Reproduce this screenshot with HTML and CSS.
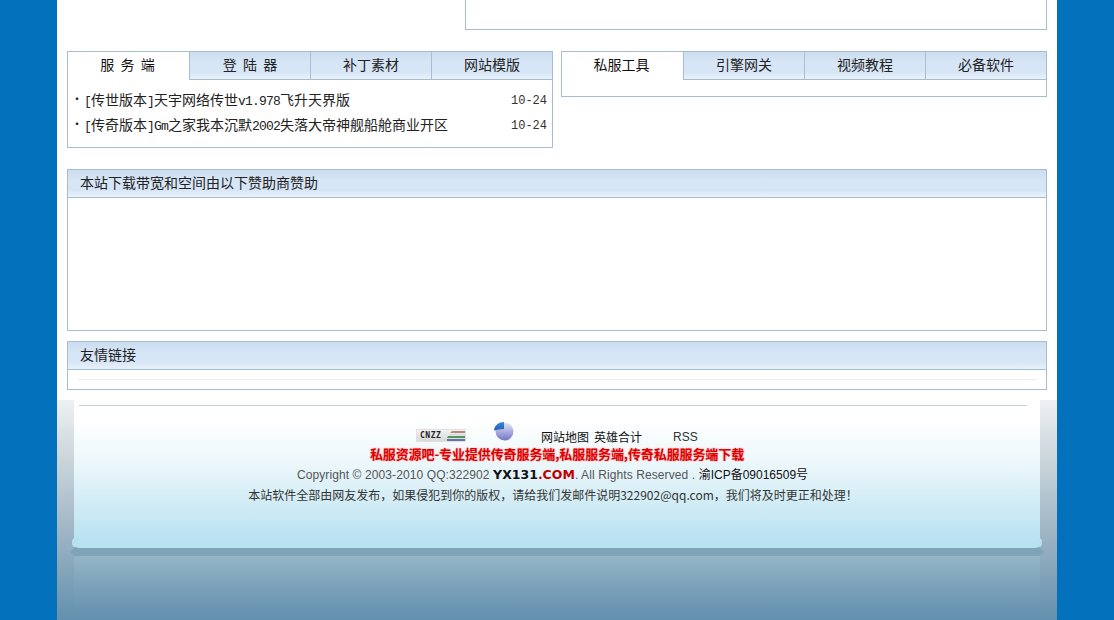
FILE: index.html
```html
<!DOCTYPE html>
<html lang="zh">
<head>
<meta charset="utf-8">
<title>私服资源吧</title>
<link rel="stylesheet" href="styles.css">
</head>
<body>
<div class="page">
  <div class="content">
    <div class="top-row"><div class="top-box"></div></div>
    <div class="tab-row">
      <div class="panel">
        <div class="tabs">
          <div class="tab active">服 务 端</div>
          <div class="tab">登 陆 器</div>
          <div class="tab">补丁素材</div>
          <div class="tab">网站模版</div>
        </div>
        <ul class="list">
          <li><span class="dot">·</span><span class="item"><span class="latin">[</span>传世版本<span class="latin">]</span>天宇网络传世<span class="latin">v1.978</span>飞升天界版</span><span class="date">10-24</span></li>
          <li><span class="dot">·</span><span class="item"><span class="latin">[</span>传奇版本<span class="latin">]Gm</span>之家我本沉默<span class="latin">2002</span>失落大帝神舰船舱商业开区</span><span class="date">10-24</span></li>
        </ul>
      </div>
      <div class="panel panel-empty">
        <div class="tabs">
          <div class="tab active">私服工具</div>
          <div class="tab">引擎网关</div>
          <div class="tab">视频教程</div>
          <div class="tab">必备软件</div>
        </div>
        <div class="panel-spacer"></div>
      </div>
    </div>
    <section class="box sponsor">
      <h2 class="box-title">本站下载带宽和空间由以下赞助商赞助</h2>
      <div class="sponsor-body"></div>
    </section>
    <section class="box links">
      <h2 class="box-title">友情链接</h2>
      <div class="links-body"><div class="links-line"></div></div>
    </section>
  </div>
  <footer class="footer">
    <div class="footer-main">
      <div class="footer-rule"></div>
      <div class="footer-nav">
        <span class="cnzz"><span class="cnzz-text">CNZZ</span>
          <svg class="cnzz-bars" width="18" height="10" viewBox="0 0 18 10"><path d="M5 0H18V2H3Z" fill="#b9867c"/><rect x="2" y="3" width="16" height="1" fill="#d9d9d9"/><path d="M1 5H18V7H0Z" fill="#4f9a58"/><rect y="8" width="18" height="2" fill="#6a6fb0"/></svg></span>
        <svg class="pie" width="22" height="20" viewBox="0 0 22 20"><defs><linearGradient id="pg" x1="0" y1="0" x2="0" y2="1"><stop offset="0" stop-color="#e4e4f8"/><stop offset="1" stop-color="#7475c8"/></linearGradient><linearGradient id="pb" x1="0" y1="0" x2="0" y2="1"><stop offset="0" stop-color="#3a86dc"/><stop offset="1" stop-color="#1f5fb4"/></linearGradient></defs><circle cx="11.5" cy="10.5" r="9" fill="url(#pg)"/><path d="M1 9.5 C1.5 4 6 1 11 1 L11 8 C7 8 4 9 1 9.5 Z" fill="url(#pb)"/></svg>
        <span class="nav-links">网站地图</span>
        <span class="nav-links">英雄合计</span>
        <span class="rss">RSS</span>
      </div>
      <p class="slogan">私服资源吧-专业提供传奇服务端,私服服务端,传奇私服服务端下载</p>
      <p class="copy">Copyright © 2003-2010 QQ:322902 <b class="brand">YX131<span class="brand-red">.COM</span></b>. All Rights Reserved . <span class="icp">渝ICP备09016509号</span></p>
      <p class="notice">本站软件全部由网友发布，如果侵犯到你的版权，请给我们发邮件说明322902@qq.com，我们将及时更正和处理！</p>
    </div>
    <div class="footer-strip"></div>
    <div class="footer-base"></div>
  </footer>
</div>
</body>
</html>
```
FILE: styles.css
```css
* { box-sizing: border-box; }
html, body { margin: 0; padding: 0; height: 620px; overflow: hidden; }
body {
  background: #0471bc;
  font-family: "Noto Sans CJK SC", "Liberation Sans", sans-serif;
  color: #222;
}
.page { width: 1000px; height: 620px; margin: 0 auto; background: #fff; display: flex; flex-direction: column; }
.content { padding: 0 10px; height: 400px; }
.top-row { display: flex; justify-content: flex-end; height: 30px; }
.top-box { width: 582px; border: 1px solid #a6bdcb; border-top: 0; }
.tab-row { display: flex; align-items: flex-start; justify-content: space-between; margin-top: 21px; }
.panel { width: 486px; border: 1px solid #a6bdcb; background: #fff; }
.tabs { display: grid; grid-template-columns: repeat(4, 121px); height: 28px; }
.tab {
  background: linear-gradient(#cbddf0, #d7e6f6 40%, #d7e6f6 75%, #e9f2fb);
  border-left: 1px solid #a6bfd6;
  border-bottom: 1px solid #a6bdcb;
  font-size: 14px;
  line-height: 24px;
  text-align: center;
  word-spacing: 3px;
  color: #222;
}
.tab.active { background: #fff; border: 0; color: #111; padding-right: 2px; }
.panel-spacer { height: 16px; }
.list { list-style: none; margin: 0; padding: 6px 5px 11px 3px; }
.list li { display: flex; align-items: center; height: 25px; font-size: 14px; color: #222; }
.dot { width: 13px; flex: none; font-size: 12px; }
.item { flex: 1; white-space: nowrap; }
.latin { font-family: "Liberation Mono", monospace; font-size: 13px; letter-spacing: -0.8px; }
.date { font-family: "Liberation Mono", monospace; font-size: 12px; color: #333; padding-top: 4px; }
.box { border: 1px solid #a6bdcb; background: #fff; }
.box-title {
  margin: 0;
  height: 28px;
  padding-left: 12px;
  font-size: 14px;
  font-weight: normal;
  line-height: 25px;
  color: #222;
  background: linear-gradient(#cbddf0, #d7e6f6 40%, #d7e6f6 75%, #e9f2fb);
  border-bottom: 1px solid #a6bdcb;
}
.sponsor { margin-top: 21px; height: 162px; }
.links { margin-top: 10px; height: 49px; }
.links-body { padding: 9px 10px 0; }
.links-line { height: 1px; background: #f3ece9; }
.footer {
  flex: 1;
  display: flex;
  flex-direction: column;
  background: linear-gradient(#eef1f3 0, #cdd7dc 25%, #9fb5c4 60%, #6390ae 100%);
}
.footer-main {
  position: relative;
  width: 966px;
  height: 148px;
  margin: 0 auto 0 17px;
  background: linear-gradient(#fff 0, #fff 18px, #eef8fb 60px, #bce3f1 135px, #b7e1f0 100%);
  border-radius: 0 0 5px 5px;
  text-align: center;
  padding-top: 5px;
}
.footer-main::before,
.footer-main::after {
  content: "";
  position: absolute;
  bottom: 1px;
  width: 6px;
  height: 9px;
  border-radius: 50%;
  background: #b7e1f0;
}
.footer-main::before { left: -2px; }
.footer-main::after { right: -2px; }
.footer-rule { height: 1px; margin: 0 13px 0 5px; background: #c4ced3; }
.footer-nav { display: flex; align-items: flex-start; height: 39px; padding-left: 342px; font-size: 12px; color: #111; }
.cnzz { display: flex; align-items: center; justify-content: space-between; width: 50px; height: 13px; margin-top: 23px; padding: 0 0 0 3px; background: linear-gradient(#f3f3f3, #d8d8d8); border: 1px solid #e0e0e0; }
.cnzz-text { font-family: "DejaVu Sans Mono", monospace; font-size: 8px; line-height: 10px; font-weight: bold; color: #222; letter-spacing: 0.5px; }
.pie { margin: 15px 0 0 27px; }
.nav-links { margin-top: 22px; line-height: 18px; }
.pie + .nav-links { margin-left: 26px; }
.nav-links + .nav-links { margin-left: 5px; }
.rss { margin: 22px 0 0 31px; line-height: 18px; color: #333; font-family: "Liberation Sans", sans-serif; }
.slogan { margin: 0; height: 21px; font-size: 13px; font-weight: bold; line-height: 18px; letter-spacing: -0.1px; color: #e00000; text-shadow: 0 0 2px rgba(255, 60, 60, 0.5); }
.copy { margin: 0; height: 20px; padding-right: 9px; font-family: "Liberation Sans", "Noto Sans CJK SC", sans-serif; font-size: 12px; line-height: 18px; letter-spacing: 0.1px; color: #555; }
.brand { font-family: "DejaVu Sans", sans-serif; font-size: 12.5px; color: #111; letter-spacing: 0; }
.brand-red { color: #c00000; }
.icp { color: #111; letter-spacing: 0; }
.notice { margin: 0; padding-right: 8px; font-family: "Noto Sans CJK SC", "Liberation Sans", sans-serif; font-size: 12px; line-height: 18px; color: #333; }
.footer-strip {
  height: 8px;
  margin: 0 13px;
  background: #7fa3b9;
  clip-path: polygon(0 50%, 4px 0, calc(100% - 4px) 0, 100% 50%, calc(100% - 4px) 100%, 4px 100%);
}
.footer-base {
  margin: 0 17px;
  flex: 1;
  background: linear-gradient(#94b5c6, #749db7 60%, #6390ae);
}
```
